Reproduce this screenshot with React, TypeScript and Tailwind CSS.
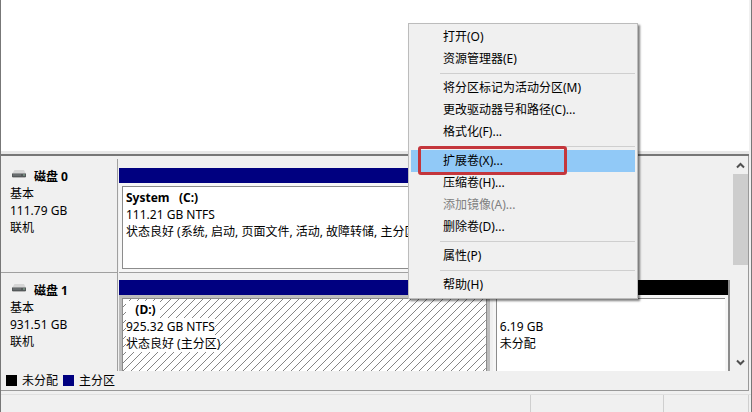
import type { ReactNode } from "react";
import { clsx } from "clsx";

type MenuEntry = { label: string; disabled?: boolean; active?: boolean };

const menuGroups: MenuEntry[][] = [
  [{ label: "打开(O)" }, { label: "资源管理器(E)" }],
  [{ label: "将分区标记为活动分区(M)" }, { label: "更改驱动器号和路径(C)..." }, { label: "格式化(F)..." }],
  [
    { label: "扩展卷(X)...", active: true },
    { label: "压缩卷(H)..." },
    { label: "添加镜像(A)...", disabled: true },
    { label: "删除卷(D)..." },
  ],
  [{ label: "属性(P)" }],
  [{ label: "帮助(H)" }],
];

function DiskIcon() {
  return (
    <svg width="14" height="9" viewBox="0 0 14 9" className="mt-1 shrink-0" aria-hidden="true">
      <path d="M2.5 0h9.500L14 4H0z" fill="#d6d6d6" />
      <rect y="3.5" width="14" height="3.5" fill="#55595a" />
      <path d="M1 5h8" stroke="#7d8283" />
      <rect x="11" y="4.500" width="2" height="1" fill="#8fb79c" />
      <path d="M0.500 7.500h13" stroke="#b5b5b5" />
    </svg>
  );
}

function DiskLabel({ name, size, last }: { name: string; size: string; last?: boolean }) {
  return (
    <div
      className={clsx(
        "w-[117px] shrink-0 border-r border-[#a0a0a0] pt-[7px] pl-[9px] leading-[17px]",
        !last && "border-b",
      )}
    >
      <div className="flex gap-2 pl-0.5">
        <DiskIcon />
        <h2 className="pt-0.5 font-bold">{name}</h2>
      </div>
      <p>基本</p>
      <p>{size}</p>
      <p>联机</p>
    </div>
  );
}

function Volume({
  title,
  lines,
  primary,
  selected,
  clipped,
  className,
}: {
  title?: ReactNode;
  lines: string[];
  primary?: boolean;
  selected?: boolean;
  clipped?: boolean;
  className?: string;
}) {
  return (
    <section className={clsx("flex min-w-0 flex-col", className)}>
      <div className={clsx("h-[15px] shrink-0", primary ? "bg-[#000080]" : "bg-black")} />
      <div
        className={clsx(
          "flex flex-1 flex-col px-[3px] pt-[3px]",
          selected ? "bg-[#bcbcbc]" : "bg-[#f6f6f6]",
          !clipped && "pb-[3px]",
        )}
      >
        <div
          className={clsx(
            "relative flex-1 overflow-hidden border-t border-l border-[#8c8c8c] bg-white pt-0.5 pl-[3px] leading-[17px] whitespace-nowrap",
            !clipped && "border-b",
            selected && "border-r",
          )}
        >
          {selected && (
            <svg className="absolute inset-0 h-full w-full" aria-hidden="true">
              <defs>
                <pattern id="hatch" width="8" height="8" patternUnits="userSpaceOnUse">
                  <path d="M-1 9 9 -1M-1 1 1 -1M7 9 9 7" stroke="#777" strokeWidth="0.9" />
                </pattern>
              </defs>
              <rect width="100%" height="100%" fill="url(#hatch)" />
            </svg>
          )}
          <h3 className="relative h-[17px] font-bold">
            <span className="inline-block bg-white pr-1 whitespace-pre">{title}</span>
          </h3>
          {lines.map((line) => (
            <p key={line} className="relative h-[17px]">
              <span className="inline-block bg-white">{line}</span>
            </p>
          ))}
        </div>
      </div>
    </section>
  );
}

function ScrollBar() {
  return (
    <div className="flex w-[15px] shrink-0 flex-col bg-[#f0f0f0]">
      <button type="button" aria-label="向上滚动" className="flex h-[18px] shrink-0 items-center justify-center">
        <svg width="9" height="7" viewBox="0 0 9 7" fill="none" stroke="#505050" strokeWidth="2">
          <path d="m1 5.5 3.5-3.5L8 5.5" />
        </svg>
      </button>
      <div className="h-[91px] bg-[#cdcdcd]" />
      <button type="button" aria-label="向下滚动" className="mt-auto flex h-[17px] shrink-0 items-center justify-center">
        <svg width="9" height="7" viewBox="0 0 9 7" fill="none" stroke="#505050" strokeWidth="2">
          <path d="m1 1.5 3.5 3.5L8 1.5" />
        </svg>
      </button>
    </div>
  );
}

function ContextMenu() {
  return (
    <div
      role="menu"
      className="absolute top-[23px] left-[407px] w-[230px] border border-[#bcbcbc] bg-[#f0f0f0] p-0.5 shadow-[2px_2px_2px_rgba(0,0,0,0.5)]"
    >
      {menuGroups.map((group, i) => (
        <div key={group[0].label}>
          {i > 0 && (
            <div className="py-[3px] pl-[29px]">
              <div className="h-px bg-[#cfcfcf]" />
            </div>
          )}
          {group.map((item) => (
            <div key={item.label} className="relative">
              <button
                type="button"
                role="menuitem"
                disabled={item.disabled}
                className={clsx(
                  "block h-[22px] w-full pl-8 text-left leading-[22px] whitespace-nowrap",
                  item.active && "bg-[#91c9f7]",
                  item.disabled && "text-[#808080]",
                )}
              >
                {item.label}
              </button>
              {item.active && (
                <div className="pointer-events-none absolute -top-1 left-[7px] h-[29px] w-[149px] rounded-[3px] border-[3px] border-[#c4363c]" />
              )}
            </div>
          ))}
        </div>
      ))}
    </div>
  );
}

export default function App() {
  return (
    <main className="relative flex h-screen flex-col overflow-hidden border-x border-[#777] bg-[#f0f0f0] font-['Noto_Sans','Noto_Sans_CJK_SC',sans-serif] text-[12px] text-black">
      <div className="mr-0.5 flex h-[156px] shrink-0 flex-col justify-end border-b-2 border-[#777] bg-white">
        <div className="h-[3px] bg-[#e8e8e8]" />
      </div>

      <div className="mr-0.5 flex min-h-0 flex-1 flex-col border-r border-b border-[#999]">
        <div className="flex min-h-0 flex-1">
          <div className="flex min-w-0 flex-1 flex-col overflow-hidden">
            <div className="flex h-[117px] shrink-0 pt-[3px]">
              <DiskLabel name="磁盘 0" size="111.79 GB" />
              <div className="flex flex-1 pt-[9px]">
                <Volume
                  primary
                  title="System   (C:)"
                  lines={["111.21 GB NTFS", "状态良好 (系统, 启动, 页面文件, 活动, 故障转储, 主分区)"]}
                  className="ml-px w-4/5 border-b border-[#a0a0a0]"
                />
              </div>
            </div>
            <div className="flex min-h-0 flex-1">
              <DiskLabel name="磁盘 1" size="931.51 GB" last />
              <div className="flex flex-1 pt-[7px]">
                <Volume
                  primary
                  selected
                  clipped
                  title="   (D:)"
                  lines={["925.32 GB NTFS", "状态良好 (主分区)"]}
                  className="ml-px flex-[372]"
                />
                <Volume
                  clipped
                  lines={["6.19 GB", "未分配"]}
                  className="ml-[3px] flex-[236] border-r-2 border-[#8c8c8c]"
                />
              </div>
              <div className="w-[3px] shrink-0" />
            </div>
          </div>
          <ScrollBar />
        </div>
        <ul className="flex h-[19px] shrink-0 items-center gap-[5px] pl-[5px] leading-[19px]">
          <li className="flex items-center gap-[5px]">
            <span className="size-[11px] bg-black" />
            未分配
          </li>
          <li className="flex items-center gap-[5px]">
            <span className="size-[11px] bg-[#000080]" />
            主分区
          </li>
        </ul>
      </div>

      <footer className="mt-[3px] flex h-[18px] shrink-0 border-t border-[#e0e0e0]">
        <div className="flex-1 border-r border-[#cfcfcf]" />
        <div className="w-[133px] border-r border-[#cfcfcf]" />
        <div className="w-[85px] border-r border-[#cfcfcf]" />
        <div className="w-0.5" />
      </footer>

      <ContextMenu />
    </main>
  );
}
